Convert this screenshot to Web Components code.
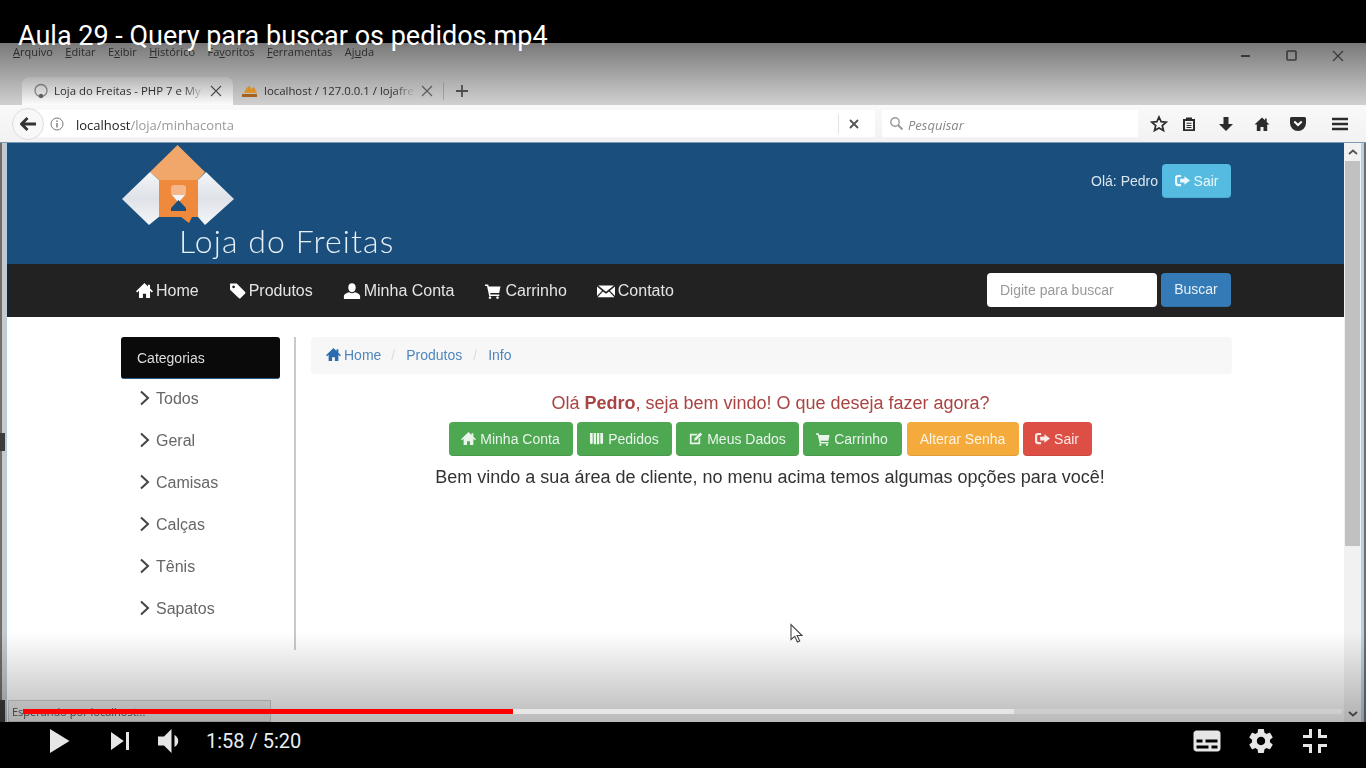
<!DOCTYPE html>
<html lang="pt-BR">
<head>
<meta charset="utf-8">
<title>Aula 29 - Query para buscar os pedidos.mp4</title>
<style>
  html, body { margin: 0; height: 100%; background: #000; overflow: hidden; font-family: "Liberation Sans", Arial, sans-serif; }
</style>
</head>
<body>
<yt-player></yt-player>

<script>
  const GLYPHS = {
    home: 'M8 1 0 8.800l1.100 1.100 1.700-1.600V15h3.700v-4h3v4h3.700V8.300l1.700 1.600L16 8.800l-2.800-2.700V2.500h-2v1.700z',
    tag: 'M1 1.500h6.300l7.900 7.900a1 1 0 0 1 0 1.400l-4.400 4.400a1 1 0 0 1-1.400 0L1 7.300zM4.300 3.300a1.300 1.300 0 1 0 .01 0z',
    user: 'M8 1c2.200 0 3.300 1.700 3.300 3.800S10.200 9 8 9 4.700 6.900 4.700 4.800 5.800 1 8 1zM5.500 9.200c1.200 1 3.800 1 5 0 2.200.6 4.700 1.500 4.700 3.500V15H.8v-2.300c0-2 2.500-2.900 4.700-3.500z',
    cart: 'M0 1.500h3.200l.5 2H15.500l-1.300 6.500H5.200l.3 1.500h8.800V13H4.200L2 3H0zM5 13.300a1.300 1.300 0 1 0 .01 0zM12.500 13.300a1.300 1.300 0 1 0 .01 0z',
    envelope: 'M1 3h14L8 8.700zM0 4l4.500 3.700L0 12.500zM16 4l-4.500 3.700L16 12.500zM5.300 8.400 8 10.500l2.700-2.100 4.800 5.100H.5z',
    logout: 'M6.500 2H3a3 3 0 0 0-3 3v6a3 3 0 0 0 3 3h3.500v-2.300h-3a1.200 1.200 0 0 1-1.200-1.200v-5a1.200 1.200 0 0 1 1.200-1.200h3zM10 3.500 16 8l-6 4.500V10H5.500V6H10z',
    bars: 'M1 2h3v11l-1.500 1L1 13zM5 2h2.500v12H5zM8.500 2H11v12H8.500zM12 2h3v11l-1.500 1-1.500-1z',
    edit: 'M2 3h8.500L8.700 4.800H3.800v7.400h7.400V8.800L13 7v7H2zM7 7.800 13 1.500l2.200 2.200-6.200 6-2.600.7z'
  };

  class GIcon extends HTMLElement {
    connectedCallback() {
      const size = this.getAttribute('size') || 14;
      this.attachShadow({ mode: 'open' }).innerHTML = `
        <style>:host { display: inline-flex; flex: none; } svg { display: block; fill: currentColor; }</style>
        <svg width="${size}" height="${size}" viewBox="0 0 16 16"><path fill-rule="evenodd" d="${GLYPHS[this.getAttribute('name')]}"/></svg>`;
    }
  }
  customElements.define('g-icon', GIcon);

  class ShopBtn extends HTMLElement {
    constructor() {
      super();
      this.attachShadow({ mode: 'open' }).innerHTML = `
        <style>
          :host {
            display: inline-flex; align-items: center; justify-content: center; gap: 4px;
            box-sizing: border-box; height: 34px; border-radius: 4px;
            font-size: 14px; color: rgba(255,255,255,.88); background: var(--bg, #4ea852);
            border-bottom: 1px solid rgba(0,0,0,.08);
          }
        </style>
        <slot></slot>`;
    }
  }
  customElements.define('shop-btn', ShopBtn);

  class BrowserBar extends HTMLElement {
    constructor() {
      super();
      this.attachShadow({ mode: 'open' }).innerHTML = `
        <style>
          :host { display: block; background: #d0d0d0; color: #333; font-family: "Open Sans", sans-serif; }
          .menu { height: 34px; display: flex; padding-left: 13px; font-size: 11px; color: #444; line-height: 16px; }
          .menu span { margin-right: 12.500px; padding-top: 1px; white-space: nowrap; }
          .menu u { text-decoration-thickness: 1px; }
          .win { margin-left: auto; display: flex; color: #555; }
          .win svg { display: block; margin-top: 6px; }
          .tabs { height: 28px; display: flex; align-items: stretch; padding-left: 22px; font-size: 11.400px; }
          .tab { width: 211px; box-sizing: border-box; display: flex; align-items: center; padding: 0 11px; gap: 5px; white-space: nowrap; }
          .tab.two { padding-left: 8px; gap: 5px; }
          .tab b { font-weight: 400; flex: 1; margin-top: -2px; -webkit-mask-image: linear-gradient(90deg, #000 85%, transparent); mask-image: linear-gradient(90deg, #000 85%, transparent); }
          .tab.on { background: linear-gradient(#dedede, #fdfdfd); border-radius: 8px 8px 0 0; }
          .tab svg { flex: none; }
          .plus { margin-left: -1px; padding-left: 11px; border-left: 1px solid #aaa; margin-block: 5px; display: flex; align-items: center; }
          .nav { height: 38px; background: linear-gradient(#f9f9f9, #f2f2f2); border-bottom: 1px solid #7d9ab5; box-sizing: border-box; display: flex; align-items: center; padding-left: 12px; }
          .url { width: 863px; height: 27px; box-sizing: border-box; background: #fff; border-radius: 14px 2px 2px 14px; display: flex; align-items: center; font-size: 13px; color: #999; }
          .back { width: 32px; height: 32px; box-sizing: border-box; border: 1px solid #ddd; border-radius: 50%; background: #f8f8f8; display: flex; align-items: center; justify-content: center; flex: none; }
          .url .info { margin: 0 12px 0 6px; flex: none; }
          .url span { padding-top: 2px; }
          .url em { font-style: normal; color: #222; }
          .url .x { margin-left: auto; padding: 0 16px 0 10px; border-left: 1px solid #e3e3e3; height: 20px; display: flex; align-items: center; }
          .find { width: 256px; height: 27px; margin-left: 7px; background: #fff; display: flex; align-items: center; gap: 4px; box-sizing: border-box; padding-left: 7px; font-size: 13px; font-style: italic; color: #888; }
          .find span { padding-top: 2px; }
          .tools { display: flex; align-items: center; margin-left: 12px; color: #2c2c2c; }
          .tools svg { display: block; }
        </style>
        <div class="menu">
          <span><u>A</u>rquivo</span><span><u>E</u>ditar</span><span>E<u>x</u>ibir</span><span><u>H</u>istórico</span><span>Fa<u>v</u>oritos</span><span><u>F</u>erramentas</span><span>Aj<u>u</u>da</span>
          <div class="win">
            <svg width="14" height="14" viewBox="0 0 14 14" style="margin-right:32px"><path d="M2 7h9" stroke="currentColor" stroke-width="2"/></svg>
            <svg width="14" height="14" viewBox="0 0 14 14" style="margin-right:32px"><rect x="2" y="2" width="9" height="9" rx="1" fill="none" stroke="currentColor" stroke-width="1.600"/></svg>
            <svg width="14" height="14" viewBox="0 0 14 14" style="margin-right:21px"><path d="M2 2l10 10M12 2 2 12" stroke="currentColor" stroke-width="1.200"/></svg>
          </div>
        </div>
        <div class="tabs">
          <div class="tab on">
            <svg width="16" height="16" viewBox="0 0 16 16"><circle cx="8" cy="7.500" r="6" fill="none" stroke="#8a8a8a" stroke-width="1.300"/><circle cx="8" cy="13" r="2.200" fill="#666"/></svg>
            <b>Loja do Freitas - PHP 7 e My</b>
            <svg width="12" height="12" viewBox="0 0 12 12"><path d="M1 1l10 10M11 1 1 11" stroke="#555" stroke-width="1.200"/></svg>
          </div>
          <div class="tab two">
            <svg width="18" height="14" viewBox="0 0 18 14"><path d="M3 9q3-7 6-7l1 3 3-2 3 6z" fill="#f0a030"/><path d="M1 10h15v3H1z" fill="#b06a20"/></svg>
            <b>localhost / 127.0.0.1 / lojafre</b>
            <svg width="12" height="12" viewBox="0 0 12 12"><path d="M1 1l10 10M11 1 1 11" stroke="#666" stroke-width="1.200"/></svg>
          </div>
          <div class="plus"><svg width="14" height="14" viewBox="0 0 14 14"><path d="M7 1v12M1 7h12" stroke="#555" stroke-width="1.800"/></svg></div>
        </div>
        <div class="nav">
          <div class="url">
            <div class="back"><svg width="16" height="14" viewBox="0 0 16 14"><path d="M7.500 1 1.500 7l6 6M2 7h14" fill="none" stroke="#333" stroke-width="2.800"/></svg></div>
            <svg class="info" width="14" height="14" viewBox="0 0 14 14"><circle cx="7" cy="7" r="6" fill="none" stroke="#777"/><path d="M7 6v4.500M7 3.500v1.500" stroke="#777" stroke-width="1.400"/></svg>
            <span><em>localhost</em>/loja/minhaconta</span>
            <div class="x"><svg width="10" height="10" viewBox="0 0 10 10"><path d="M1 1l8 8M9 1 1 9" stroke="#555" stroke-width="1.800"/></svg></div>
          </div>
          <div class="find">
            <svg width="15" height="15" viewBox="0 0 15 15"><circle cx="6" cy="6" r="4.200" fill="none" stroke="#999" stroke-width="1.400"/><path d="M9 9l4.500 4.500" stroke="#999" stroke-width="2"/></svg>
            <span>Pesquisar</span>
          </div>
          <div class="tools">
            <svg width="18" height="18" viewBox="0 0 18 18" style="margin-right:13px"><path d="M9 2l2.100 4.700 5.100.5-3.900 3.400 1.200 5L9 13l-4.500 2.600 1.200-5-3.900-3.400 5.100-.5z" fill="none" stroke="currentColor" stroke-width="1.700"/></svg>
            <svg width="16" height="16" viewBox="0 0 16 16" style="margin-right:21px"><path d="M2 3h3V1.500h6V3h3v12H2zM4 5v8.300h8V5zM5.500 6.700h5v1h-5zM5.500 9h5v1h-5zM5.500 11h5v1h-5z" fill="currentColor" fill-rule="evenodd"/></svg>
            <svg width="16" height="16" viewBox="0 0 16 16" style="margin-right:20px"><path d="M5.500 1h5v7H15l-7 7-7-7h4.500z" fill="currentColor"/></svg>
            <svg width="16" height="16" viewBox="0 0 16 16" style="margin-right:19px"><path d="M8 1.500.5 8.500h2.300V15h3.700v-4h3v4h3.700V8.500h2.300l-2.800-2.600V2.500h-1.700v1.800z" fill="currentColor"/></svg>
            <svg width="18" height="16" viewBox="0 0 18 16" style="margin-right:24px"><path d="M2.500 1h13A1.500 1.500 0 0 1 17 2.500V7A8 8 0 0 1 1 7V2.500A1.500 1.500 0 0 1 2.500 1z" fill="currentColor"/><path d="M5.300 5.500 9 9l3.700-3.500" fill="none" stroke="#fff" stroke-width="2"/></svg>
            <svg width="18" height="16" viewBox="0 0 18 16"><path d="M1 3h16M1 8h16M1 13h16" stroke="currentColor" stroke-width="2.600"/></svg>
          </div>
        </div>`;
    }
  }
  customElements.define('browser-bar', BrowserBar);

  class ShopHeader extends HTMLElement {
    constructor() {
      super();
      this.attachShadow({ mode: 'open' }).innerHTML = `
        <style>
          :host { display: block; height: 121px; box-sizing: border-box; background: #1a4e7c; padding: 2px 113px 0 114px; }
          .row { display: flex; justify-content: space-between; }
          svg { display: block; }
          .brand { font-family: Lato, sans-serif; font-weight: 300; font-size: 32px; line-height: 28px; color: #e6f0f6; padding-left: 58px; letter-spacing: 1.100px; white-space: nowrap; }
          .who { display: flex; align-items: center; gap: 4px; height: 34px; margin-top: 19px; font-size: 14px; color: #d8e6f0; }
          shop-btn { width: 69px; --bg: #55bbe0; }
        </style>
        <div class="row">
          <div>
            <svg width="115" height="82" viewBox="0 0 115 82">
              <defs>
                <linearGradient id="w" x1="0" y1="0" x2="0" y2="1"><stop offset="0" stop-color="#f4f5f8"/><stop offset=".5" stop-color="#dfe2e8"/><stop offset="1" stop-color="#f4f5f8"/></linearGradient>
              </defs>
              <path d="M56.500 0 84 27 77 35H38l-9-8z" fill="#f2a76a"/>
              <path d="M29 27 1 54l27 26 11-9V36z" fill="url(#w)"/>
              <path d="M85 27 113 54 84 80l-7-8V35z" fill="url(#w)"/>
              <path d="M38 35h39v37h-6l-3 6-8-6H38z" fill="#ef8a3c"/>
              <rect x="50" y="40" width="15" height="11" rx="3" fill="#f5b78a"/>
              <path d="M51 50h13l-6 7 6 6H51l6-6z" fill="#f2f4f7"/>
              <path d="M57.500 55 65 63v3H50v-3z" fill="#1a4e7c"/>
            </svg>
            <div class="brand">Loja do Freitas</div>
          </div>
          <div class="who">
            <span>Olá: Pedro</span>
            <shop-btn><g-icon name="logout" size="15"></g-icon>Sair</shop-btn>
          </div>
        </div>`;
    }
  }
  customElements.define('shop-header', ShopHeader);

  class ShopNav extends HTMLElement {
    constructor() {
      super();
      this.attachShadow({ mode: 'open' }).innerHTML = `
        <style>
          :host { display: flex; align-items: center; height: 53px; box-sizing: border-box; background: #222; padding: 0 113px 0 129px; color: #e4e4e4; font-size: 16px; }
          a { display: flex; align-items: center; gap: 3px; margin-right: 30px; white-space: nowrap; }
          a.wide { margin-right: 31px; }
          a.cart { gap: 4px; }
          a g-icon { color: #fff; }
          .find { margin-left: auto; margin-bottom: 2px; display: flex; gap: 4px; }
          .input { width: 170px; height: 34px; box-sizing: border-box; background: #fff; border-radius: 4px; color: #999; font-size: 14px; line-height: 34px; padding-left: 13px; }
          shop-btn { width: 70px; --bg: #337ab7; }
        </style>
        <a><g-icon name="home" size="17"></g-icon>Home</a>
        <a><g-icon name="tag" size="17"></g-icon>Produtos</a>
        <a class="wide"><g-icon name="user" size="18"></g-icon>Minha Conta</a>
        <a class="cart"><g-icon name="cart" size="16"></g-icon>Carrinho</a>
        <a><g-icon name="envelope" size="18"></g-icon>Contato</a>
        <div class="find"><div class="input">Digite para buscar</div><shop-btn>Buscar</shop-btn></div>`;
    }
  }
  customElements.define('shop-nav', ShopNav);

  class ShopSidebar extends HTMLElement {
    constructor() {
      super();
      const items = ['Todos', 'Geral', 'Camisas', 'Calças', 'Tênis', 'Sapatos'];
      this.attachShadow({ mode: 'open' }).innerHTML = `
        <style>
          :host { display: block; width: 175px; box-sizing: border-box; height: 313px; padding-right: 14px; border-right: 2px solid #c9c9c9; }
          .head { height: 42px; box-sizing: border-box; background: #0a0a0a; border-bottom: 1px solid #2a5a86; border-radius: 3px; color: #ddd; font-size: 14px; line-height: 42px; padding-left: 16px; }
          ul { list-style: none; margin: -1px 0 0; padding: 0; }
          li { height: 42px; display: flex; align-items: center; gap: 6px; padding-left: 18px; font-size: 16px; color: #666; }
          svg { display: block; flex: none; margin-top: -2px; }
        </style>
        <div class="head">Categorias</div>
        <ul>${items.map(t => `<li><svg width="11" height="16" viewBox="0 0 11 16"><path d="M2 1.500 9 8l-7 6.500" fill="none" stroke="#444" stroke-width="2"/></svg>${t}</li>`).join('')}</ul>`;
    }
  }
  customElements.define('shop-sidebar', ShopSidebar);

  class ShopContent extends HTMLElement {
    constructor() {
      super();
      this.attachShadow({ mode: 'open' }).innerHTML = `
        <style>
          :host { display: block; width: 921px; margin-left: 15px; text-align: center; }
          .crumb { height: 37px; box-sizing: border-box; padding: 0 0 2px 15px; background: #f7f7f7; border-radius: 4px; display: flex; align-items: center; gap: 11px; font-size: 14px; color: #4f86bd; }
          .crumb i { font-style: normal; color: #ddd; }
          .crumb span { display: flex; align-items: center; gap: 3px; }
          .crumb span:first-child { margin-right: -1px; }
          .crumb g-icon { color: #2a6cae; }
          h3 { margin: 19px 0 0; padding-right: 2px; font-size: 18px; font-weight: 400; line-height: 20px; color: #a94442; }
          .btns { display: flex; justify-content: center; gap: 4px; margin-top: 9px; padding-right: 3px; }
          p { margin: 10px 0 0; font-size: 18px; line-height: 22px; color: #333; padding-right: 3px; }
        </style>
        <div class="crumb">
          <span><g-icon name="home" size="15"></g-icon>Home</span><i>/</i><span>Produtos</span><i>/</i><span>Info</span>
        </div>
        <h3>Olá <b>Pedro</b>, seja bem vindo! O que deseja fazer agora?</h3>
        <div class="btns">
          <shop-btn style="width:124px"><g-icon name="home" size="15"></g-icon>Minha Conta</shop-btn>
          <shop-btn style="width:95px"><g-icon name="bars" size="15"></g-icon>Pedidos</shop-btn>
          <shop-btn style="width:123px"><g-icon name="edit" size="15"></g-icon>Meus Dados</shop-btn>
          <shop-btn style="width:99px"><g-icon name="cart" size="14"></g-icon>Carrinho</shop-btn>
          <shop-btn style="width:112px;margin-left:1px;--bg:#f5ab3c">Alterar Senha</shop-btn>
          <shop-btn style="width:69px;--bg:#dd4f45"><g-icon name="logout" size="15"></g-icon>Sair</shop-btn>
        </div>
        <p>Bem vindo a sua área de cliente, no menu acima temos algumas opções para você!</p>`;
    }
  }
  customElements.define('shop-content', ShopContent);

  class PlayerControls extends HTMLElement {
    constructor() {
      super();
      this.attachShadow({ mode: 'open' }).innerHTML = `
        <style>
          :host { display: flex; align-items: center; height: 46px; box-sizing: border-box; background: #000; color: #eee; font-family: Roboto, sans-serif; font-size: 20px; padding: 0 24px 8px 32px; }
          svg { display: block; width: 54px; height: 54px; fill: #e6e6e6; flex: none; margin: -4px 0; }
          .time { margin-left: 6px; color: #e8eef2; }
          .right { margin-left: auto; display: flex; }
        </style>
        <svg viewBox="0 0 36 36"><path d="M12 26V10l13 8z"/></svg>
        <svg viewBox="0 0 36 36" style="margin-left:7px"><path d="M12 24l8.500-6L12 12zM22 12v12h2V12z"/></svg>
        <svg viewBox="0 0 36 36" style="margin-left:-1px"><path d="M8 21h4l5 5V10l-5 5H8zM19 14v8c1.480-.68 2.500-2.230 2.500-4 0-1.740-1.020-3.260-2.500-4z"/></svg>
        <span class="time">1:58 / 5:20</span>
        <div class="right">
          <svg viewBox="0 0 36 36"><path fill-rule="evenodd" d="M11 11c-1.100 0-2 .9-2 2v10c0 1.100.9 2 2 2h14c1.100 0 2-.9 2-2V13c0-1.100-.9-2-2-2zM11 17h4v2h-4zM17 17h8v2h-8zM11 21h8v2h-8zM21 21h4v2h-4z"/></svg>
          <svg viewBox="0 0 36 36"><path fill-rule="evenodd" d="m23.940 18.780c.03-.25.050-.51.050-.78 0-.27-.02-.52-.05-.78l1.680-1.320c.15-.12.19-.33.090-.51l-1.600-2.760c-.09-.17-.31-.24-.48-.17l-1.990.8c-.41-.32-.86-.58-1.350-.78l-.30-2.120c-.02-.19-.19-.33-.39-.33h-3.200c-.2 0-.36.14-.39.33l-.30 2.120c-.48.2-.93.47-1.350.78l-1.990-.8c-.18-.07-.39 0-.48.17l-1.600 2.760c-.10.17-.05.39.09.51l1.680 1.320c-.03.25-.05.52-.05.78 0 .26.02.52.05.78l-1.680 1.320c-.15.12-.19.33-.09.51l1.600 2.760c.09.17.31.24.48.17l1.990-.8c.41.32.86.58 1.350.78l.30 2.120c.02.19.19.33.39.33h3.200c.2 0 .36-.14.39-.33l.30-2.120c.48-.2.93-.47 1.350-.78l1.990.8c.18.07.39 0 .48-.17l1.600-2.760c.09-.17.05-.39-.09-.51zm-5.940 2.010c-1.540 0-2.800-1.250-2.800-2.800 0-1.540 1.250-2.800 2.800-2.800 1.540 0 2.800 1.250 2.800 2.800 0 1.540-1.250 2.800-2.800 2.800z"/></svg>
          <svg viewBox="0 0 36 36"><path d="M14 14h-4v2h6v-6h-2zM22 14v-4h-2v6h6v-2zM20 26h2v-4h4v-2h-6zM10 22h4v4h2v-6h-6z"/></svg>
        </div>`;
    }
  }
  customElements.define('player-controls', PlayerControls);

  class YtPlayer extends HTMLElement {
    constructor() {
      super();
      this.attachShadow({ mode: 'open' }).innerHTML = `
        <style>
          :host { display: flex; flex-direction: column; height: 768px; position: relative; overflow: hidden; background: #000; }
          .top { height: 43px; flex: none; background: #000; }
          .video { height: 679px; flex: none; display: flex; flex-direction: column; position: relative; overflow: hidden; filter: blur(.6px); }
          .frame { flex: 1; min-height: 0; display: flex; background: #c6d0da; }
          .edge { width: 7px; flex: none; background:
            linear-gradient(#3c3c3c, #3c3c3c) 0 290px / 5px 18px no-repeat,
            linear-gradient(#3c3c3c, #3c3c3c) 0 557px / 5px 22px no-repeat,
            linear-gradient(90deg, #6e6e6e 0 2px, #c9c9c9 2px 5px, #b5cde0 5px); }
          .page { width: 1337px; flex: none; background: #fff; }
          .main { display: flex; padding: 20px 0 0 114px; }
          .scroll { width: 17px; flex: none; background: #f1f1f1; display: flex; flex-direction: column; }
          .scroll svg { display: block; margin: 6px auto 0; }
          .scroll .thumb { width: 15px; height: 385px; margin: 6px auto 0; background: #c1c1c1; }
          .scroll .dn { margin-top: auto; margin-bottom: 5px; }
          .right { width: 5px; flex: none; background: linear-gradient(90deg, #b5d0e5 0 3px, #6a6f75 3px); }
          .status { position: absolute; left: 8px; bottom: 0; width: 263px; height: 22px; box-sizing: border-box; padding: 3px 0 0 3px; background: #efefef; border: 1px solid #cfcfcf; font-size: 11px; color: #555; font-family: "Open Sans", sans-serif; }
          .shade-top { position: absolute; left: 0; right: 0; top: 0; height: 62px; background: linear-gradient(rgba(0,0,0,.42), rgba(0,0,0,0)); }
          .shade-bot { position: absolute; left: 0; right: 0; bottom: 0; height: 90px; background: linear-gradient(rgba(0,0,0,0), rgba(0,0,0,.27)); }
          .cursor { position: absolute; left: 789px; top: 623px; }
          .title { position: absolute; left: 18px; top: 21px; font-family: Roboto, sans-serif; font-size: 27px; line-height: 30px; color: #fff; white-space: nowrap; }
          .bar { position: absolute; left: 23px; top: 709px; width: 1319px; height: 5px; background: rgba(255,255,255,.2); }
          .bar i { position: absolute; left: 0; top: 0; height: 5px; display: block; }
        </style>
        <div class="top"></div>
        <div class="video">
          <browser-bar></browser-bar>
          <div class="frame">
            <div class="edge"></div>
            <div class="page">
              <shop-header></shop-header>
              <shop-nav></shop-nav>
              <div class="main">
                <shop-sidebar></shop-sidebar>
                <shop-content></shop-content>
              </div>
            </div>
            <div class="scroll">
              <svg width="10" height="6" viewBox="0 0 10 6"><path d="M1 5l4-3.500L9 5" fill="none" stroke="#555" stroke-width="1.800"/></svg>
              <div class="thumb"></div>
              <svg class="dn" width="10" height="6" viewBox="0 0 10 6"><path d="M1 1l4 3.500L9 1" fill="none" stroke="#555" stroke-width="1.800"/></svg>
            </div>
            <div class="right"></div>
          </div>
          <div class="status">Esperando por localhost...</div>
          <div class="shade-top"></div>
          <div class="shade-bot"></div>
        </div>
        <player-controls></player-controls>
        <svg class="cursor" width="16" height="21" viewBox="0 0 16 21"><path d="M2 1.500v15l3.800-3.200 2.600 5.700 2.300-1-2.600-5.500h4.900z" fill="#fff" stroke="#444" stroke-width="1.100"/></svg>
        <div class="title">Aula 29 - Query para buscar os pedidos.mp4</div>
        <div class="bar">
          <i style="width:991px;background:rgba(255,255,255,.5)"></i>
          <i style="width:490px;background:#f00"></i>
        </div>`;
    }
  }
  customElements.define('yt-player', YtPlayer);
</script>
</body>
</html>
